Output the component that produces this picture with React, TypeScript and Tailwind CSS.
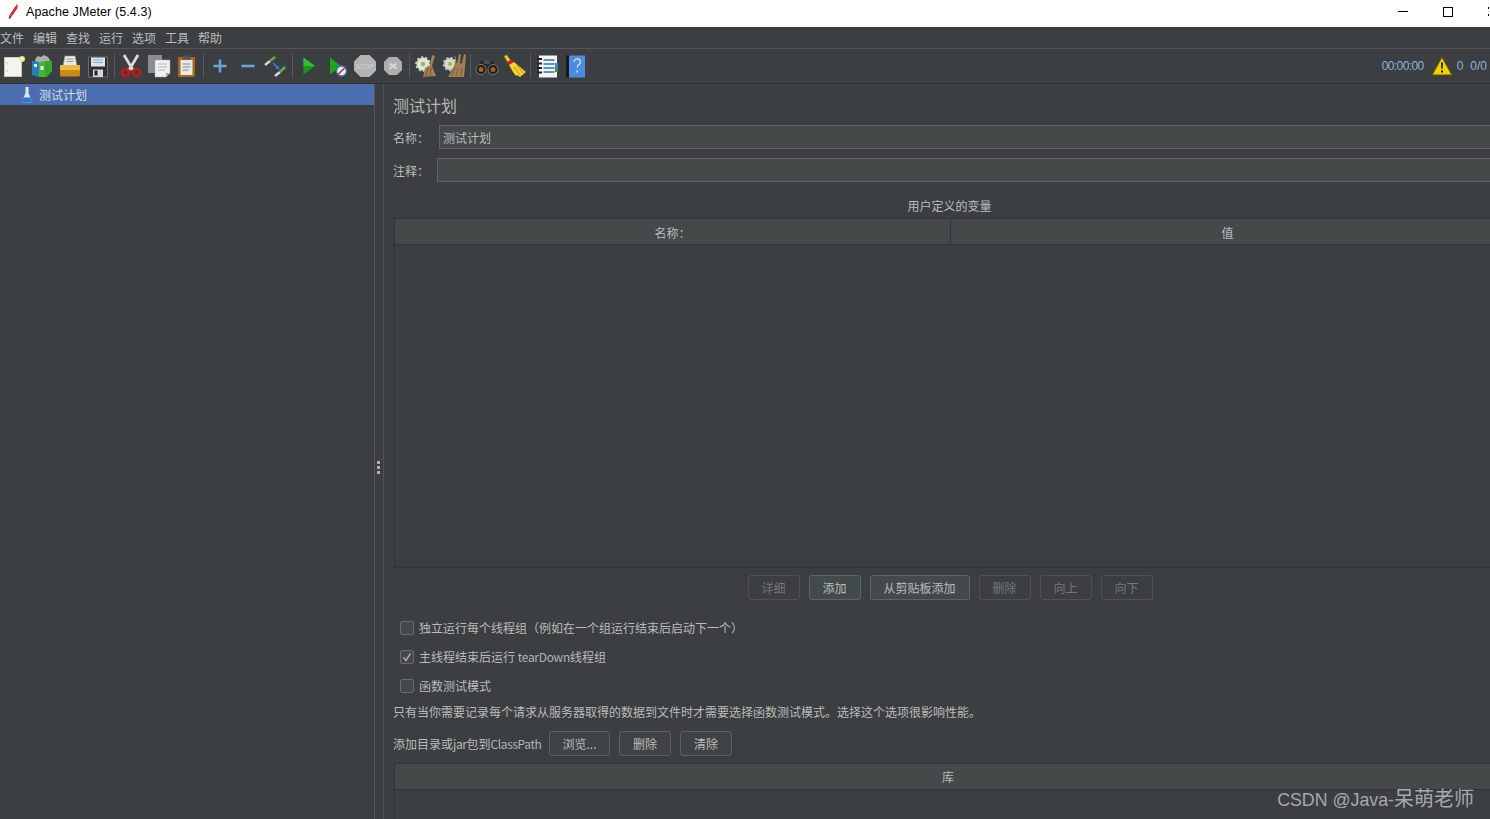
const font = '"Noto Sans CJK SC", "Liberation Sans", sans-serif';

const NewIcon = () => (
  <svg width="24" height="24" viewBox="0 0 24 24">
    <rect x="2.500" y="3.500" width="17" height="19" fill="#f4f4ee" stroke="#c9c9c0" />
    <circle cx="5" cy="9" r="0.7" fill="#aaa" />
    <circle cx="5" cy="17" r="0.7" fill="#aaa" />
    <circle cx="20" cy="5" r="3" fill="#e9dc86" />
    <circle cx="20" cy="5" r="1.600" fill="#fff8c8" />
  </svg>
);
const TemplatesIcon = () => (
  <svg width="24" height="24" viewBox="0 0 24 24">
    <path d="M5 5l3-3 3 1 3-2 4 2 2 3-1 4H6z" fill="#a9b0ad" />
    <path d="M2 7l7 1v15l-7-2z" fill="#2a7fb8" />
    <path d="M9 8l6-1v16H9z" fill="#43b53b" />
    <path d="M15 7h7v10l-5 6h-2z" fill="#35a52c" />
    <rect x="4" y="10" width="3" height="3" fill="#d6e7ef" />
    <rect x="10.500" y="12" width="3" height="4" fill="#dff2da" />
  </svg>
);
const OpenIcon = () => (
  <svg width="24" height="24" viewBox="0 0 24 24">
    <path d="M7 2h10l2 10H5z" fill="#e9e9e9" stroke="#9b9b9b" strokeWidth="0.6" />
    <path d="M8.500 5h7M8.500 7.500h7" stroke="#999" />
    <path d="M2 11h20v10a1.500 1.500 0 0 1-1.500 1.500h-17A1.500 1.500 0 0 1 2 21z" fill="#c98a18" />
    <path d="M2 11h20v5H2z" fill="#efb847" />
  </svg>
);
const SaveIcon = () => (
  <svg width="24" height="24" viewBox="0 0 24 24">
    <path d="M2.500 3h19v20h-19z" fill="#2e3033" stroke="#77797c" strokeWidth="0.8" />
    <rect x="5" y="3.500" width="14" height="9" fill="#dfe5ec" />
    <path d="M7 6h10M7 8.500h10" stroke="#86a6cc" />
    <rect x="7" y="15.500" width="10" height="7.500" fill="#d6d6d6" />
    <rect x="8.500" y="16.500" width="3" height="5" fill="#222" />
  </svg>
);
const CutIcon = () => (
  <svg width="24" height="24" viewBox="0 0 24 24">
    <path d="M5 1l9 15M19 1l-9 15" stroke="#d8dadb" strokeWidth="2.800" />
    <circle cx="6.500" cy="18.500" r="3.500" fill="none" stroke="#c81818" strokeWidth="2.600" />
    <circle cx="17.500" cy="18.500" r="3.500" fill="none" stroke="#c81818" strokeWidth="2.600" />
  </svg>
);
const CopyIcon = () => (
  <svg width="24" height="24" viewBox="0 0 24 24">
    <rect x="1" y="1" width="14" height="18" fill="#8b8d8f" />
    <path d="M8 6h15v13l-4 4H8z" fill="#efefef" stroke="#aaa" strokeWidth="0.5" />
    <path d="M11 10h9M11 13h9M11 16h7" stroke="#b5b5b5" />
    <path d="M19 23v-4h4z" fill="#a9a9a9" />
  </svg>
);
const PasteIcon = () => (
  <svg width="24" height="24" viewBox="0 0 24 24">
    <rect x="3" y="3" width="17" height="20" rx="1" fill="#a8661a" />
    <rect x="5.500" y="6" width="12" height="15" fill="#e9e9e6" />
    <rect x="8" y="1.500" width="7" height="4" fill="#555" />
    <path d="M7.500 10h8M7.500 13h8M7.500 16h6" stroke="#888" />
  </svg>
);
const PlusIcon = () => (
  <svg width="24" height="24" viewBox="0 0 24 24">
    <path d="M12 5.500v13M5.500 12h13" stroke="#6aa3de" strokeWidth="2.500" />
  </svg>
);
const MinusIcon = () => (
  <svg width="24" height="24" viewBox="0 0 24 24">
    <path d="M5.500 12h13" stroke="#6aa3de" strokeWidth="2.500" />
  </svg>
);
const ToggleIcon = () => (
  <svg width="24" height="24" viewBox="0 0 24 24">
    <path d="M1 11l5-4" stroke="#d5d7d8" strokeWidth="2.400" />
    <path d="M6 7l5-4" stroke="#5aa84a" strokeWidth="2.800" />
    <path d="M11 22l5-4" stroke="#d5d7d8" strokeWidth="2.400" />
    <path d="M16 18l5-5" stroke="#5aa84a" strokeWidth="2.800" />
    <path d="M9 9l5 5" stroke="#3e84d8" strokeWidth="1.500" />
    <path d="M15.500 15.500l-4-1 3-3z" fill="#3e84d8" />
  </svg>
);
const PlayIcon = () => (
  <svg width="24" height="24" viewBox="0 0 24 24">
    <path d="M6.500 3.500L18 12 6.500 20.500z" fill="#149a14" />
    <path d="M6.500 3.500L18 12H6.500z" fill="#34bd34" />
  </svg>
);
const PlayNoTimerIcon = () => (
  <svg width="24" height="24" viewBox="0 0 24 24">
    <path d="M5 3.500L16 12 5 20.500z" fill="#1da51d" />
    <circle cx="16.500" cy="17" r="5" fill="#e8f0f8" stroke="#3d74b8" strokeWidth="1.400" />
    <path d="M13 20.500l7-7" stroke="#d8262c" strokeWidth="1.600" />
  </svg>
);
const StopIcon = () => (
  <svg width="24" height="24" viewBox="0 0 24 24">
    <path d="M7.500 1h9L23 7.500v9L16.500 23h-9L1 16.500v-9z" fill="#b4b4b4" />
    <text x="12" y="14.500" textAnchor="middle" fontSize="7" fontWeight="700" fill="#c8c8c8" fontFamily="Liberation Sans">
      STOP
    </text>
  </svg>
);
const ShutdownIcon = () => (
  <svg width="24" height="24" viewBox="0 0 24 24">
    <path d="M8 3h8l5 5v8l-5 5H8l-5-5V8z" fill="#aeaeae" />
    <path d="M8.500 9.500l7 5M15.500 9.500l-7 5" stroke="#d2d2d2" strokeWidth="2.400" />
  </svg>
);
const ClearIcon = () => (
  <svg width="24" height="24" viewBox="0 0 24 24">
    <circle cx="9" cy="10" r="6.500" fill="#e4e4de" strokeDasharray="2 2" stroke="#d5d5cf" strokeWidth="2.500" />
    <circle cx="9" cy="10" r="2.200" fill="#8cbf3f" />
    <path d="M18 1l3 1-3 10 4 10-13 1 2-9 5-3z" fill="#a37e57" />
    <path d="M12 22l2-8M16 22l1-8" stroke="#7d5b3a" />
  </svg>
);
const ClearAllIcon = () => (
  <svg width="24" height="24" viewBox="0 0 24 24">
    <circle cx="8" cy="10" r="6" fill="#d8d8d2" strokeDasharray="2 2" stroke="#c5c5bf" strokeWidth="2.500" />
    <circle cx="8" cy="10" r="2" fill="#8cbf3f" />
    <path d="M12 2l2 1-2 9-6 11h16l1-10 1-12-2-1-2 9-2 1 1-9-2-1-2 10z" fill="#a37e57" />
    <path d="M9 22l4-8M14 22l2-8M19 22l1-8" stroke="#7d5b3a" />
  </svg>
);
const SearchIcon = () => (
  <svg width="24" height="24" viewBox="0 0 24 24">
    <path d="M6 7h4v3h4V7h4l5 9H1z" fill="#2a2a2a" />
    <rect x="9" y="6" width="6" height="4" fill="#4c4c4c" />
    <circle cx="6" cy="15.500" r="5" fill="#1a1a1a" stroke="#8f8f8f" strokeWidth="0.8" />
    <circle cx="18" cy="15.500" r="5" fill="#1a1a1a" stroke="#8f8f8f" strokeWidth="0.8" />
    <circle cx="6" cy="15.500" r="2.500" fill="#a8611f" />
    <circle cx="18" cy="15.500" r="2.500" fill="#a8611f" />
  </svg>
);
const BroomIcon = () => (
  <svg width="24" height="24" viewBox="0 0 24 24">
    <path d="M1 2l3-1 4 6-3 2z" fill="#e7c22a" />
    <path d="M4 8l5-3 2 3-5 3z" fill="#c8201e" />
    <path d="M6 11l5-3 12 10-6 5-3-2-1 1-3-4z" fill="#f1d32e" />
    <path d="M11 13l6 8M14 11l6 8" stroke="#b99c15" />
  </svg>
);
const LogIcon = () => (
  <svg width="24" height="24" viewBox="0 0 24 24">
    <rect x="4" y="1.500" width="18" height="22" fill="#f2f4f6" />
    <rect x="20" y="14" width="3" height="4" fill="#2e9a3a" />
    <rect x="20" y="9" width="3" height="5" fill="#3e84d8" />
    <path d="M8.500 6h11M8.500 10h11M8.500 14h11M8.500 18h11" stroke="#2f6fc0" strokeWidth="1.400" />
    <path d="M2 5h5M2 9.500h5M2 14h5M2 18.500h5" stroke="#222" strokeWidth="1.800" />
  </svg>
);
const HelpIcon = () => (
  <svg width="24" height="24" viewBox="0 0 24 24">
    <rect x="3" y="1.500" width="5" height="22" fill="#17191b" />
    <rect x="6" y="1.500" width="16" height="22" fill="#4c8be0" />
    <path d="M11 8a3.200 3.200 0 1 1 5 2.600c-1.200.9-1.800 1.500-1.800 3" fill="none" stroke="#d7e7fb" strokeWidth="1.300" />
    <rect x="13.500" y="16.500" width="1.500" height="2" fill="#d7e7fb" />
  </svg>
);

const toolbarGroups = [
  [NewIcon, TemplatesIcon, OpenIcon, SaveIcon],
  [CutIcon, CopyIcon, PasteIcon],
  [PlusIcon, MinusIcon, ToggleIcon],
  [PlayIcon, PlayNoTimerIcon, StopIcon, ShutdownIcon],
  [ClearIcon, ClearAllIcon],
  [SearchIcon, BroomIcon],
];

const menus = ["文件", "编辑", "查找", "运行", "选项", "工具", "帮助"];

const Btn = ({ label, w, off, primary }: { label: string; w: string; off?: boolean; primary?: boolean }) => (
  <div
    className={`${w} h-[25px] flex items-center justify-center rounded-[3px] border text-[12px] ${
      off
        ? "border-[#4f5152] text-[#747677]"
        : primary
        ? "border-[#5f6567] bg-[#434a4c] text-[#bbbbbb]"
        : "border-[#5e6060] bg-[#3f4345] text-[#bbbbbb]"
    }`}
  >
    {label}
  </div>
);

const Check = ({ label, checked }: { label: React.ReactNode; checked?: boolean }) => (
  <div className="h-[29px] flex items-center pl-[6px]">
    <div className="w-[14px] h-[14px] rounded-[2px] border border-[#6b6b6b] bg-[#43494a] flex items-center justify-center">
      {checked && (
        <svg width="10" height="10" viewBox="0 0 10 10">
          <path d="M1.500 5.500L4 8.500 8.500 1.500" fill="none" stroke="#a9a9a9" strokeWidth="1.500" />
        </svg>
      )}
    </div>
    <span className="ml-[5px] text-[12px] whitespace-nowrap">{label}</span>
  </div>
);

export default function App() {
  return (
    <div
      className="relative w-[1490px] h-[819px] overflow-hidden flex flex-col bg-[#3c3f41] text-[#bbbbbb]"
      style={{ fontFamily: font }}
    >
      <div className="h-[27px] shrink-0 bg-white flex items-center text-black pb-[4px]">
        <svg className="ml-[6px]" width="14" height="18" viewBox="0 0 14 18">
          <path d="M11 1c1 1 1 3 0 5L6 13 3.500 12z" fill="#d8272d" />
          <path d="M3.500 12L6 13l-2 3-1.500-1z" fill="#7c3b78" />
          <path d="M10 1.500l1.500-.5L11 4z" fill="#f0a030" />
        </svg>
        <span className="ml-[6px] pt-[1px] text-[12.500px] tracking-[0.1px]" style={{ fontFamily: '"Liberation Sans", sans-serif' }}>
          Apache JMeter (5.4.3)
        </span>
        <div className="ml-auto flex items-center">
          <div className="w-[10px] h-[1px] bg-black" />
          <div className="ml-[35px] w-[10px] h-[10px] border border-black" />
          <div className="ml-[35px] w-[2px] h-[9px] flex flex-col justify-between">
            <div className="w-[1px] h-[2px] bg-black" />
            <div className="w-[1px] h-[2px] bg-black" />
          </div>
        </div>
      </div>

      <div className="h-[22px] shrink-0 flex items-center border-b border-[#555555] text-[12px]">
        {menus.map((m) => (
          <span key={m} className="w-[33px] pt-[1px]">
            {m}
          </span>
        ))}
      </div>

      <div className="h-[35px] shrink-0 flex items-center border-b border-[#323232]">
        {toolbarGroups.map((group, i) => (
          <div key={i} className="flex items-center">
            {i > 0 && <div className="w-[1px] h-[24px] mx-[2px] bg-[#565859]" />}
            {group.map((Icon, j) => (
              <div key={j} className="w-[28px] h-[28px] flex items-center justify-center">
                <Icon />
              </div>
            ))}
          </div>
        ))}
        <div className="flex items-center">
          <div className="w-[1px] h-[24px] ml-[1px] mr-[2px] bg-[#565859]" />
          <div className="w-[28px] h-[28px] flex items-center justify-center">
            <LogIcon />
          </div>
          <div className="w-[28px] h-[28px] flex items-center justify-center">
            <HelpIcon />
          </div>
        </div>
        <div className="ml-auto flex items-center text-[12px] text-[#8fb1d6]" style={{ fontFamily: '"Liberation Sans", sans-serif' }}>
          <span className="tracking-[-0.6px]">00:00:00</span>
          <svg className="ml-[7px]" width="22" height="20" viewBox="0 0 22 20">
            <path d="M11 1l10 18H1z" fill="#f2d100" stroke="#5f5310" strokeWidth="1.200" />
            <path d="M10 6.500h2L11.600 13h-1.200zM10 14.500h2v2h-2z" fill="#1c1c1c" />
          </svg>
          <span className="ml-[4px]">0</span>
          <span className="ml-[7px] mr-[3px]">0/0</span>
        </div>
      </div>

      <div className="flex-1 min-h-0 flex">
        <div className="w-[375px] shrink-0 border-r border-[#555555]">
          <div className="h-[21px] bg-[#4b6eaf] flex items-center pl-[20px] text-[12px] text-[#d8dde6]">
            <svg width="14" height="18" viewBox="0 0 14 18">
              <path d="M5.500 1h3v6l4 9.500h-11l4-9.500z" fill="#dfe5ee" />
              <path d="M3.500 11.500h7l2 5h-11z" fill="#2a78d0" />
            </svg>
            <span className="ml-[5px]">测试计划</span>
          </div>
        </div>

        <div className="w-[9px] shrink-0 border-r border-[#4e5254] flex flex-col items-center justify-center gap-[2px] pt-[31px] pr-[1px]">
          <div className="w-[3px] h-[3px] bg-[#b0b0b0]" />
          <div className="w-[3px] h-[3px] bg-[#b0b0b0]" />
          <div className="w-[3px] h-[3px] bg-[#b0b0b0]" />
        </div>

        <div className="flex-1 min-w-0 overflow-hidden pl-[10px]">
          <div className="w-[1112px] flex flex-col">
            <div className="h-[41px] flex items-center text-[16px] text-[#b5b5b5] pt-[1px] -ml-[1px]">测试计划</div>
            <div className="h-[24px] flex items-center text-[12px]">
              <span className="w-[45px] pt-[2px] -ml-[1px] mr-[1px]">名称：</span>
              <div className="flex-1 h-[24px] flex items-center pl-[3px] pt-[2px] bg-[#45494a] border border-[#646464]">测试计划</div>
            </div>
            <div className="h-[24px] mt-[9px] flex items-center text-[12px]">
              <span className="w-[43px] pt-[2px] -ml-[1px] mr-[1px]">注释：</span>
              <div className="flex-1 h-[24px] bg-[#45494a] border border-[#646464]" />
            </div>

            <div className="h-[36px] pt-[11px] flex items-center justify-center text-[12px] pr-[1px]">用户定义的变量</div>
            <div className="h-[350px] border border-[#323537] flex flex-col">
              <div className="h-[26px] shrink-0 flex bg-[#45494a] border-b border-[#323537] text-[12px]">
                <div className="w-[556px] border-r border-[#323537] flex items-center justify-center pt-[2px]">名称：</div>
                <div className="flex-1 flex items-center justify-center pt-[2px] pr-[1px]">值</div>
              </div>
            </div>

            <div className="h-[25px] mt-[7px] flex justify-center gap-[9px]">
              <Btn label="详细" w="w-[52px]" off />
              <Btn label="添加" w="w-[52px]" primary />
              <Btn label="从剪贴板添加" w="w-[100px]" primary />
              <Btn label="删除" w="w-[52px]" off />
              <Btn label="向上" w="w-[52px]" off />
              <Btn label="向下" w="w-[52px]" off />
            </div>

            <div className="mt-[13px] flex flex-col">
              <Check label="独立运行每个线程组（例如在一个组运行结束后启动下一个）" />
              <Check
                label={
                  <>
                    主线程结束后运行 <span className="tracking-[-0.3px] text-[#a8b8b4]">tearDown</span>线程组
                  </>
                }
                checked
              />
              <Check label="函数测试模式" />
            </div>

            <div className="h-[23px] flex items-center text-[12px] whitespace-nowrap -ml-[1px]">
              只有当你需要记录每个请求从服务器取得的数据到文件时才需要选择函数测试模式。选择这个选项很影响性能。
            </div>

            <div className="h-[25px] mt-[8px] flex items-center text-[12px]">
              <span className="w-[155px] whitespace-nowrap -ml-[1px] mr-[1px]">
                添加目录或<span className="tracking-[-0.4px]">jar</span>包到<span className="tracking-[-0.4px] text-[#a8b8b4]">ClassPath</span>
              </span>
              <Btn label="浏览..." w="w-[61px]" />
              <div className="w-[9px]" />
              <Btn label="删除" w="w-[52px]" />
              <div className="w-[9px]" />
              <Btn label="清除" w="w-[52px]" />
            </div>

            <div className="h-[60px] mt-[7px] border border-[#323537]">
              <div className="h-[26px] w-[1106px] flex items-center justify-center bg-[#45494a] border-b border-[#323537] text-[12px]">库</div>
            </div>
          </div>
        </div>
      </div>

      <div
        className="absolute right-[16px] bottom-[5px] text-[20px] text-[#a6a8aa] whitespace-nowrap leading-[28px]"
        style={{ fontFamily: '"Liberation Sans", "Noto Sans CJK SC", sans-serif' }}
      >
        <span className="text-[17.800px]">CSDN @Java-</span>呆萌老师
      </div>
    </div>
  );
}
